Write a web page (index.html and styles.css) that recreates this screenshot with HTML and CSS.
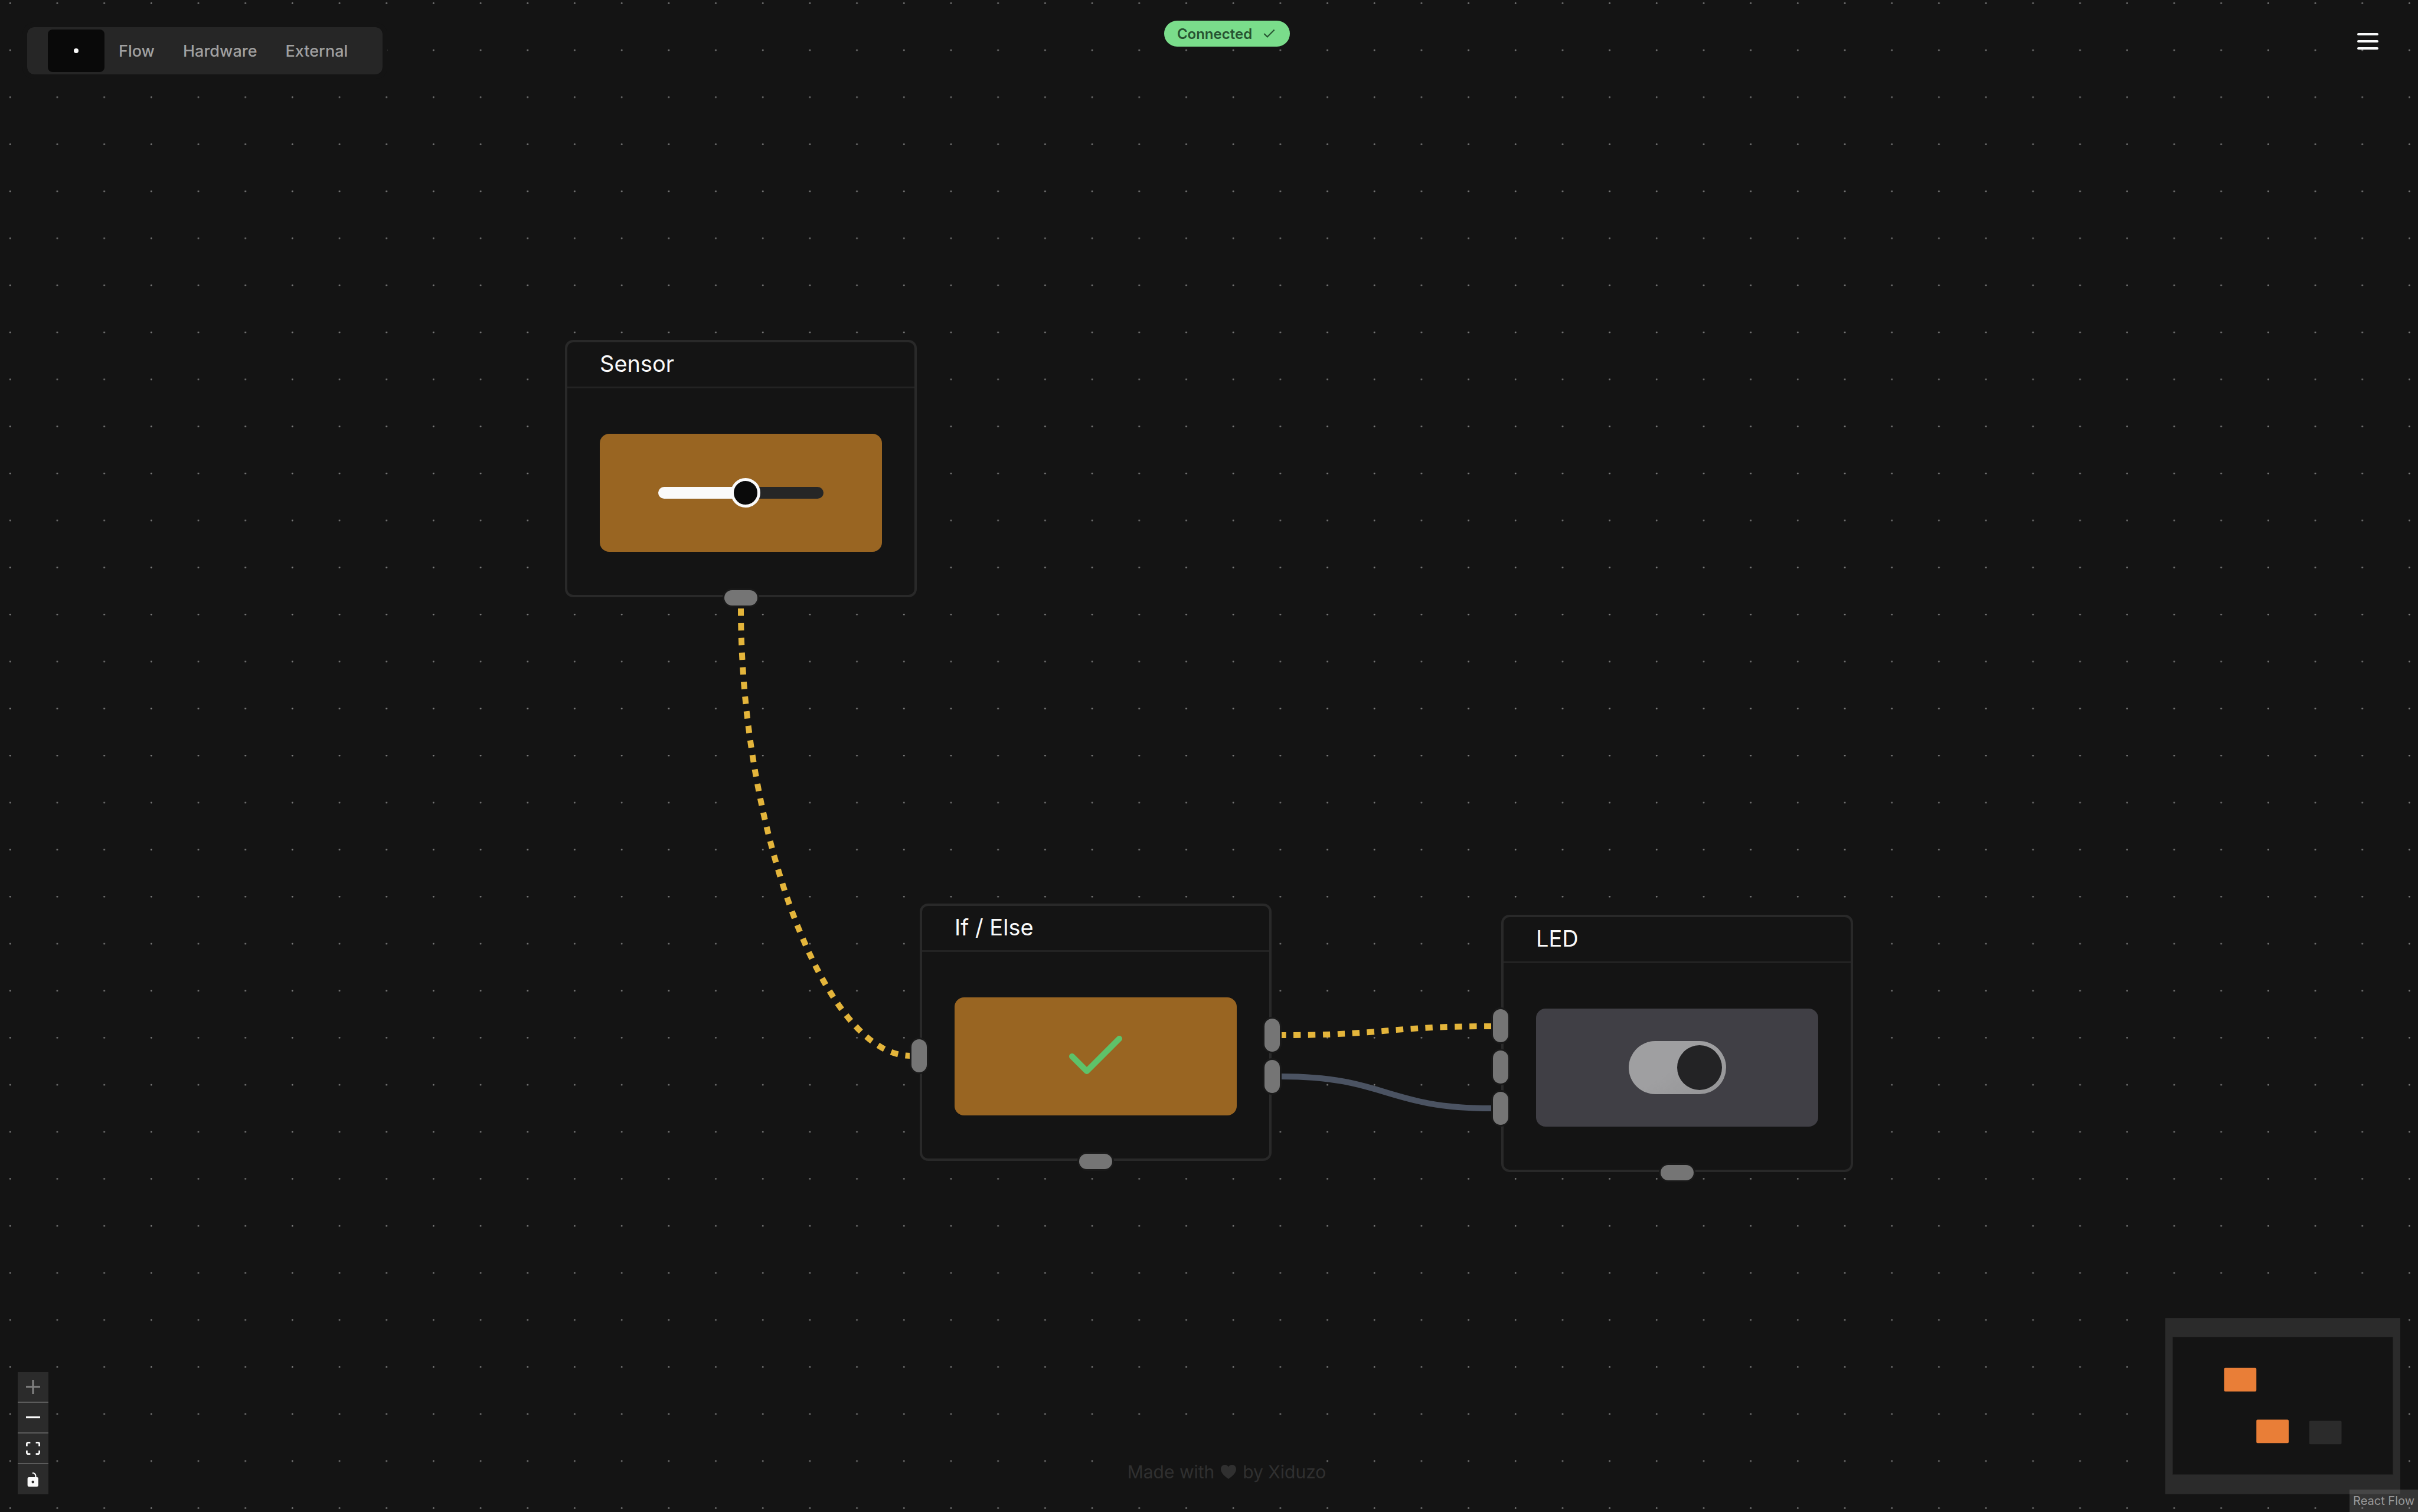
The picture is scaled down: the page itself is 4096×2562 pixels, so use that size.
FILE: index.html
```html
<!DOCTYPE html>
<html lang="en">
<head>
<meta charset="utf-8">
<title>Flow editor</title>
<link rel="stylesheet" href="styles.css">
</head>
<body>
<main class="canvas">
  <svg class="dots" viewBox="0 0 4112 2572" preserveAspectRatio="xMinYMin slice" aria-hidden="true">
    <defs>
      <pattern id="grid" width="80" height="80" patternUnits="userSpaceOnUse">
        <circle cx="17.3" cy="5.3" r="1.35" fill="#818181"/>
      </pattern>
    </defs>
    <rect width="4112" height="2572" fill="url(#grid)"/>
  </svg>

  <svg class="edges" aria-hidden="true">
    <path class="edge edge-live" d="M1255 1031C1255 1410 1398 1789 1542 1789"/>
    <path class="edge edge-live edge-late" d="M2170 1754C2348 1754 2348 1739 2526 1739"/>
    <path class="edge" d="M2170 1824C2348 1824 2348 1878 2526 1878"/>
  </svg>

  <article class="node node-sensor">
    <h2 class="node-title">Sensor</h2>
    <div class="node-body">
      <div class="tile tile-live">
        <input class="slider" type="range" min="0" max="1023" value="549" aria-label="Sensor value">
      </div>
    </div>
    <span class="handle handle-bottom"></span>
  </article>

  <article class="node node-ifelse">
    <h2 class="node-title">If / Else</h2>
    <div class="node-body">
      <div class="tile tile-live">
        <svg class="check" viewBox="0 0 24 24" aria-hidden="true"><path d="M20 6 9 17l-5-5"/></svg>
      </div>
    </div>
    <span class="handle-column handle-column-left"><span class="handle"></span></span>
    <span class="handle-column handle-column-right"><span class="handle"></span><span class="handle"></span></span>
    <span class="handle handle-bottom"></span>
  </article>

  <article class="node node-led">
    <h2 class="node-title">LED</h2>
    <div class="node-body">
      <div class="tile">
        <input class="switch" type="checkbox" role="switch" checked disabled aria-label="LED state">
      </div>
    </div>
    <span class="handle-column handle-column-left"><span class="handle"></span><span class="handle"></span><span class="handle"></span></span>
    <span class="handle handle-bottom"></span>
  </article>

  <div class="overlay">
    <header class="topbar">
      <nav class="menubar">
        <button class="menu-item menu-item-active" type="button" aria-label="Home"><span class="bullet"></span></button>
        <button class="menu-item" type="button">Flow</button>
        <button class="menu-item" type="button">Hardware</button>
        <button class="menu-item" type="button">External</button>
      </nav>
      <div class="badge">Connected
        <svg class="badge-icon" viewBox="0 0 24 24" aria-hidden="true"><path d="M20 6 9 17l-5-5"/></svg>
      </div>
      <button class="burger" type="button" aria-label="Menu">
        <svg viewBox="0 0 36 28" width="36" height="28" aria-hidden="true"><path d="M2 2h32M2 14h32M2 26h32"/></svg>
      </button>
    </header>

    <footer class="bottombar">
      <div class="controls">
        <button class="control" type="button" aria-label="Zoom in" disabled><svg viewBox="0 0 32 32"><path d="M32 18.133H18.133V32h-4.266V18.133H0v-4.266h13.867V0h4.266v13.867H32z"/></svg></button>
        <button class="control" type="button" aria-label="Zoom out"><svg viewBox="0 0 32 5"><path d="M0 0h32v4.2H0z"/></svg></button>
        <button class="control" type="button" aria-label="Fit view"><svg viewBox="0 0 32 30"><path d="M3.692 4.63c0-.53.4-.938.939-.938h5.215V0H4.708C2.13 0 0 2.054 0 4.63v5.216h3.692V4.631zM27.354 0h-5.2v3.692h5.17c.53 0 .984.4.984.939v5.215H32V4.631A4.624 4.624 0 0027.354 0zm.954 24.83c0 .532-.4.94-.939.94h-5.215v3.768h5.215c2.577 0 4.631-2.13 4.631-4.707v-5.139h-3.692v5.139zm-23.677.94c-.531 0-.939-.4-.939-.94v-5.138H0v5.139c0 2.577 2.13 4.707 4.708 4.707h5.138V25.77H4.631z"/></svg></button>
        <button class="control" type="button" aria-label="Toggle interactivity"><svg viewBox="0 0 25 32"><path d="M21.333 10.667H19.81V7.619C19.81 3.429 16.38 0 12.19 0c-4.114 1.828-1.37 2.133.305 2.438 1.676.305 4.42 2.59 4.42 5.181v3.048H3.047A3.056 3.056 0 000 13.714v15.238A3.056 3.056 0 003.048 32h18.285a3.056 3.056 0 003.048-3.048V13.714a3.056 3.056 0 00-3.048-3.047zM12.19 24.533a3.056 3.056 0 01-3.047-3.047 3.056 3.056 0 013.047-3.048 3.056 3.056 0 013.048 3.048 3.056 3.056 0 01-3.048 3.047z"/></svg></button>
      </div>
      <p class="credit">Made with
        <svg class="heart" viewBox="0 0 26 24" aria-label="love"><path d="M13 24C9 21 0 15 0 7.500C0 3 3 0 7 0C9.500 0 11.800 1.300 13 3.500C14.200 1.300 16.500 0 19 0C23 0 26 3 26 7.500C26 15 17 21 13 24z"/></svg>
        by Xiduzo</p>
      <svg class="minimap" viewBox="0 0 400 300" role="img" aria-label="Mini map">
        <rect width="400" height="300" fill="#2b2b2b"/>
        <rect x="12.500" y="32.500" width="375" height="234" fill="#141414" stroke="#222" stroke-width="1"/>
        <rect x="100" y="85" width="55" height="40" rx="2" fill="#e97e37"/>
        <rect x="155" y="173" width="55" height="40" rx="2" fill="#e97e37"/>
        <rect x="245" y="175" width="55" height="40" rx="2" fill="#2b2b2b"/>
      </svg>
    </footer>
    <a class="attribution" href="#">React Flow</a>
  </div>
</main>
</body>
</html>
```
FILE: styles.css
```css
* {
  box-sizing: border-box;
}

body {
  margin: 0;
  background: #141414;
  color: #fafafa;
  font-family: Inter, "Liberation Sans", sans-serif;
}

button {
  margin: 0;
  padding: 0;
  border: 0;
  background: none;
  color: inherit;
  font: inherit;
}

.canvas {
  position: relative;
  min-height: 100vh;
  overflow: hidden;
}

.dots,
.edges {
  position: absolute;
  top: 0;
  left: 0;
  width: 100%;
  height: 100%;
}

.edge {
  fill: none;
  stroke: #4b5362;
  stroke-width: 10;
}

.edge-live {
  stroke: #e4b53b;
  stroke-dasharray: 12.45;
}

.edge-late {
  stroke-dashoffset: 4;
}

/* Nodes sit freely on the canvas */
.node {
  position: absolute;
  width: 596px;
  height: 436px;
  border: 4px solid #292929;
  border-radius: 14px;
  background: #141414;
}

.node-sensor {
  left: 957px;
  top: 576px;
}

.node-ifelse {
  left: 1558px;
  top: 1531px;
}

.node-led {
  left: 2543px;
  top: 1550px;
}

.node-title {
  margin: 0;
  padding: 13px 55px 16px;
  border-bottom: 3px solid #232323;
  font-size: 38px;
  font-weight: 400;
  line-height: 46px;
}

.node-body {
  padding: 77px 55px;
}

.tile {
  display: flex;
  align-items: center;
  justify-content: center;
  height: 200px;
  border-radius: 16px;
  background: #403f45;
}

.tile-live {
  background: #996522;
}

.handle {
  width: 26px;
  height: 56px;
  border-radius: 13px;
  background: #757575;
  box-shadow: 0 0 0 3px #191919;
}

.handle-bottom {
  position: absolute;
  left: 50%;
  bottom: -18px;
  width: 56px;
  height: 26px;
  margin-left: -28px;
}

.handle-column {
  position: absolute;
  top: 0;
  bottom: 0;
  display: flex;
  flex-direction: column;
  justify-content: center;
  gap: 14px;
  padding-top: 80px;
}

.handle-column-left {
  left: -18px;
}

.handle-column-right {
  right: -18px;
}

.slider {
  width: 280px;
  height: 50px;
  margin: 0;
  appearance: none;
  background: none;
}

.slider::-webkit-slider-runnable-track {
  height: 20px;
  border-radius: 10px;
  background: linear-gradient(90deg, #fafafa 53%, #262626 53%);
}

.slider::-webkit-slider-thumb {
  width: 50px;
  height: 50px;
  margin-top: -15px;
  appearance: none;
  border: 5px solid #fafafa;
  border-radius: 50%;
  background: #0a0a0a;
}

.check {
  width: 120px;
  height: 120px;
  fill: none;
  stroke: #5ec269;
  stroke-width: 2;
  stroke-linecap: round;
  stroke-linejoin: round;
}

.switch {
  display: flex;
  align-items: center;
  justify-content: flex-end;
  width: 165px;
  height: 90px;
  margin: 0;
  padding: 0 7px;
  appearance: none;
  border-radius: 45px;
  background: linear-gradient(150deg, #9f9fa1 50%, #949496);
}

.switch::before {
  content: "";
  width: 76px;
  height: 76px;
  border-radius: 50%;
  background: #232325;
}

.overlay {
  display: flex;
  flex-direction: column;
  justify-content: space-between;
  min-height: 100vh;
}

.topbar {
  position: relative;
  display: grid;
  grid-template-columns: 1fr auto 1fr;
  align-items: start;
  padding: 35px 67px 0 34px;
}

.menubar {
  display: flex;
  justify-self: start;
  margin: 11px 12px;
  padding: 4px 35px;
  border-radius: 12px;
  background: #262626;
  outline: 8px solid #141414;
}

.menu-item {
  height: 72px;
  padding: 0 24px;
  border-radius: 8px;
  color: #a1a1a1;
  font-size: 27px;
  font-weight: 500;
}

.menu-item-active {
  display: flex;
  align-items: center;
  justify-content: center;
  width: 96px;
  background: #090909;
}

.bullet {
  width: 8px;
  height: 8px;
  border-radius: 50%;
  background: #fafafa;
}

.badge {
  display: flex;
  align-items: center;
  gap: 16px;
  height: 44px;
  margin-left: 94px;
  padding: 0 22px;
  border-radius: 22px;
  background: #7add8b;
  color: #275331;
  font-size: 24px;
  font-weight: 600;
}

.badge-icon {
  width: 26px;
  height: 26px;
  fill: none;
  stroke: currentColor;
  stroke-width: 2;
}

.burger {
  display: flex;
  justify-self: end;
  margin-top: 21px;
}

.burger path {
  fill: none;
  stroke: #f8f9fa;
  stroke-width: 4;
  stroke-linecap: round;
}

.bottombar {
  position: relative;
  display: grid;
  grid-template-columns: 1fr auto 1fr;
  align-items: end;
  padding: 0 30px 30px;
}

.controls {
  display: flex;
  flex-direction: column;
  width: 52px;
}

.control {
  display: flex;
  align-items: center;
  justify-content: center;
  height: 52px;
  border-bottom: 2px solid #5b5b5b;
  background: #2b2b2b;
}

.control:last-child {
  height: 51px;
  border-bottom: 0;
}

.control svg {
  width: 24px;
  max-height: 24px;
  fill: #fafafa;
}

.control:disabled svg {
  fill: #808080;
}

.credit {
  display: flex;
  align-items: center;
  gap: 11px;
  margin: 0 0 8px 60px;
  padding: 10px 0;
  background: #141414;
  color: #303030;
  font-size: 30px;
  line-height: 40px;
}

.heart {
  width: 26px;
  height: 24px;
  fill: currentColor;
}

.minimap {
  justify-self: end;
  width: 398px;
  height: 299px;
}

.attribution {
  position: absolute;
  right: 0;
  bottom: 0;
  padding: 6px;
  background: rgba(150, 150, 150, 0.25);
  color: #999;
  font-size: 20px;
  line-height: 26px;
  text-decoration: none;
}
```
